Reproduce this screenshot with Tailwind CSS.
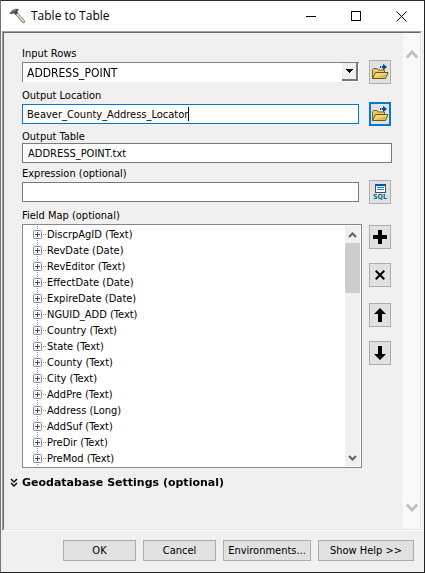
<!DOCTYPE html>
<html lang="en">
<head>
<meta charset="utf-8">
<title>Table to Table</title>
<script src="https://cdn.jsdelivr.net/npm/@tailwindcss/browser@4"></script>
</head>
<body class="bg-[#f0f0f0] text-black font-['DejaVu_Sans_Condensed','DejaVu_Sans',sans-serif] text-[11px] leading-4">
<svg class="hidden" aria-hidden="true">
  <defs>
    <symbol id="folder" viewBox="0 0 18 18">
      <path d="M1.500 15V6.500l1-1H6l1 1.500h6.500v2" fill="#e8ca6a" stroke="#7d6420"/>
      <path d="M1.500 15.500 4.500 9.500h12.500l-2.500 6z" fill="#f1d777" stroke="#6b5518"/>
      <path d="M3.500 14.500h10.500l1-3z" fill="#dcb445"/>
      <path d="M9 5V3h3V.800l4 3.200-4 3.200V5z" fill="#0b4a86"/>
      <path d="M10.500 2.500v3" stroke="#e1e1e1" stroke-width=".8"/>
    </symbol>
    <symbol id="expand" viewBox="0 0 24 16">
      <path d="M14.500 0v16" stroke="#8a8a8a" stroke-dasharray="1 1"/>
      <path d="M20 8.500h3" stroke="#8a8a8a" stroke-dasharray="1 1"/>
      <rect x="10.500" y="4.500" width="8" height="8" rx="1" fill="#f6f6f6" stroke="#8f8f8f"/>
      <path d="M12 8.500h5M14.500 6v5" stroke="#34519c"/>
    </symbol>
  </defs>
</svg>
<div class="min-h-screen flex flex-col border-l border-l-[#777] border-t border-t-[#2b2b2f] border-r border-r-[#222] border-b border-b-[#222]">
  <header class="h-[30px] bg-white flex items-center pl-2">
    <svg class="w-4 h-4 mr-1.5" viewBox="0 0 16 16" aria-hidden="true">
      <path d="M7 5 14.500 13.500" stroke="#8d7a62" stroke-width="3.200" stroke-linecap="round"/>
      <path d="M7 5 14.500 13.300" stroke="#e6d8c0" stroke-width="1.700" stroke-linecap="round"/>
      <path d="M.5 5.500 3 2.200 6 .8l4 .2L8.500 3.200 8.800 5 6.500 7 4.500 5 2.500 6.200z" fill="#4b4f52"/>
      <path d="M2 4.300 4 2.500 7 1.600" stroke="#a9adaf" fill="none"/>
    </svg>
    <h1 class="flex-1 font-['Open_Sans','Noto_Sans',sans-serif] text-xs">Table to Table</h1>
    <button type="button" aria-label="Minimize" class="w-[45px] h-full flex items-center justify-center"><svg class="w-[11px] h-[11px]" viewBox="0 0 11 11"><path d="M0 5.500h10" stroke="#000"/></svg></button>
    <button type="button" aria-label="Maximize" class="w-[45px] h-full flex items-center justify-center"><svg class="w-[11px] h-[11px]" viewBox="0 0 11 11"><rect x=".5" y=".5" width="9" height="9" fill="none" stroke="#000"/></svg></button>
    <button type="button" aria-label="Close" class="w-[45px] h-full flex items-center justify-center"><svg class="w-[11px] h-[11px]" viewBox="0 0 11 11"><path d="M.5.5l10 10M10.500.5l-10 10" stroke="#000"/></svg></button>
  </header>

  <main class="flex-1 flex mr-[2px] ml-px border-l border-t border-t-[#a0a0a0] border-l-[#a0a0a0] border-r border-b border-r-white border-b-white">
    <div class="flex-1 flex border-l border-t border-l-[#696969] border-t-[#696969] border-r border-b border-r-[#e3e3e3] border-b-[#e3e3e3]">
      <form id="tool" class="flex-1 pl-[18px] pr-[11px] pt-[13px] pb-6">
        <div>
          <label for="rows" class="block h-3.5">Input Rows</label>
          <div class="flex items-center gap-2.5 pr-px">
            <div class="relative flex-1">
              <select id="rows" class="block w-full h-5 appearance-none bg-white border-l border-t border-[#808080] pl-1 text-xs leading-4"><option>ADDRESS_POINT</option></select>
              <span class="absolute right-px top-px bottom-px w-4 bg-[#f0f0f0] border-r-2 border-b-2 border-[#777] flex items-center justify-center pointer-events-none"><svg class="w-[7px] h-1" viewBox="0 0 7 4" shape-rendering="crispEdges"><path d="M0 0h7L3.500 4z"/></svg></span>
            </div>
            <button type="button" aria-label="Browse input rows" class="w-[22px] h-6 bg-[#e1e1e1] border border-[#adadad] flex items-center justify-center"><svg class="w-[18px] h-[18px]"><use href="#folder"/></svg></button>
          </div>
        </div>
        <div class="mt-1">
          <label for="loc" class="block h-3.5">Output Location</label>
          <div class="flex items-center gap-2.5 pr-px">
            <div class="flex-1 h-5 flex bg-white border border-[#0078d7]"><input id="loc" value="Beaver_County_Address_Locator" autofocus class="field-sizing-content pl-1 pt-px outline-none border-r border-black my-0.5"></div>
            <button type="button" aria-label="Browse output location" class="w-[22px] h-6 bg-[#e1e1e1] border-2 border-[#0078d7] flex items-center justify-center"><svg class="w-[18px] h-[18px] shrink-0"><use href="#folder"/></svg></button>
          </div>
        </div>
        <div class="mt-[3px]">
          <label for="table" class="block h-3.5">Output Table</label>
          <input id="table" value="ADDRESS_POINT.txt" class="block w-full h-5 bg-white border border-[#7a7a7a] px-[5px]">
        </div>
        <div class="mt-[3px]">
          <label for="expr" class="block h-3.5">Expression (optional)</label>
          <div class="flex items-center gap-2.5 pr-px">
            <input id="expr" class="flex-1 min-w-0 h-5 bg-white border border-[#7a7a7a] px-[5px]">
            <button type="button" aria-label="SQL query builder" class="w-[22px] h-6 bg-[#e1e1e1] border border-[#adadad] flex flex-col items-center justify-center">
              <svg class="w-[11px] h-[9px] shrink-0" viewBox="0 0 11 9" shape-rendering="crispEdges"><path d="M0 0h11v9H0z" fill="#4b4f55"/><path d="M0 0h11v2H0z" fill="#0754b5"/><path d="M1 2h9v6H1z" fill="#fff"/><path d="M2 3h7v1H2zM2 5h7v1H2z" fill="#1885e0"/></svg>
              <span class="text-[7px] leading-[8px] font-bold text-[#086b94]">SQL</span>
            </button>
          </div>
        </div>
        <div class="mt-1">
          <h2 id="map" class="h-4">Field Map (optional)</h2>
          <div class="flex gap-[7px] pr-px">
            <div class="flex-1 flex bg-white border border-[#828790] p-px">
              <ul id="fields" role="tree" aria-labelledby="map" class="flex-1 -ml-px"></ul>
              <div class="w-[15px] bg-[#f0f0f0] flex flex-col items-center">
                <svg class="w-[15px] h-[17px]" viewBox="0 0 15 17"><path d="M4 11 7.500 7.500 11 11" fill="none" stroke="#606060" stroke-width="2"/></svg>
                <div class="w-[15px] h-[50px] bg-[#cdcdcd]"></div>
                <svg class="w-[15px] h-[17px] mt-auto" viewBox="0 0 15 17"><path d="M4 7 7.500 10.500 11 7" fill="none" stroke="#606060" stroke-width="2"/></svg>
              </div>
            </div>
            <div class="flex flex-col gap-3.5 pt-px">
              <button type="button" aria-label="Add field" class="w-[22px] h-6 bg-[#e1e1e1] border border-[#adadad] flex items-center justify-center"><svg class="w-3.5 h-3.5" viewBox="0 0 14 14"><path d="M5 0h4v5h5v4H9v5H5V9H0V5h5z"/></svg></button>
              <button type="button" aria-label="Remove field" class="w-[22px] h-6 bg-[#e1e1e1] border border-[#adadad] flex items-center justify-center"><svg class="w-2.5 h-2.5" viewBox="0 0 10 10"><path d="M.7.7l8.600 8.600M9.300.7.7 9.300" stroke="#000" stroke-width="2"/></svg></button>
              <button type="button" aria-label="Move up" class="mt-0.5 w-[22px] h-6 bg-[#e1e1e1] border border-[#adadad] flex items-center justify-center"><svg class="w-3 h-3.5" viewBox="0 0 12 14"><path d="M6 0l6 6H8v8H4V6H0z"/></svg></button>
              <button type="button" aria-label="Move down" class="w-[22px] h-6 bg-[#e1e1e1] border border-[#adadad] flex items-center justify-center"><svg class="w-3 h-3.5" viewBox="0 0 12 14"><path d="M6 14l6-6H8V0H4v8H0z"/></svg></button>
            </div>
          </div>
        </div>
        <button type="button" class="mt-[7px] -ml-3 flex items-center gap-1 font-bold font-['DejaVu_Sans',sans-serif]">
          <svg class="w-2 h-2.5" viewBox="0 0 8 10" aria-hidden="true"><path d="M1 1l3 3 3-3M1 5l3 3 3-3" fill="none" stroke="#000" stroke-width="1.400"/></svg>
          Geodatabase Settings (optional)
        </button>
      </form>
      <div class="w-[17px] bg-[#f9f9f9] flex flex-col justify-between items-center pt-4 pb-4">
        <svg class="w-3 h-3" viewBox="0 0 12 12"><path d="M.7 8.500 6 3l5.300 5.500" fill="none" stroke="#bfbfbf" stroke-width="2.800"/></svg>
        <svg class="w-3 h-3" viewBox="0 0 12 12"><path d="M.7 3.500 6 9l5.300-5.500" fill="none" stroke="#bfbfbf" stroke-width="2.800"/></svg>
      </div>
    </div>
  </main>

  <footer class="flex justify-end gap-[7px] pt-[9px] pb-[11px] pr-2.5">
    <button type="submit" form="tool" class="w-[73px] h-[21px] bg-[#e1e1e1] border border-[#adadad]">OK</button>
    <button type="button" class="w-[73px] h-[21px] bg-[#e1e1e1] border border-[#adadad]">Cancel</button>
    <button type="button" class="w-[88px] h-[21px] bg-[#e1e1e1] border border-[#adadad]">Environments...</button>
    <button type="button" class="w-24 h-[21px] bg-[#e1e1e1] border border-[#adadad]">Show Help &gt;&gt;</button>
  </footer>
</div>
<script>
const fields = ["DiscrpAgID (Text)","RevDate (Date)","RevEditor (Text)","EffectDate (Date)","ExpireDate (Date)","NGUID_ADD (Text)","Country (Text)","State (Text)","County (Text)","City (Text)","AddPre (Text)","Address (Long)","AddSuf (Text)","PreDir (Text)","PreMod (Text)"];
document.getElementById("fields").innerHTML = fields.map(f =>
  `<li role="treeitem" aria-expanded="false" class="h-4 flex items-start"><svg class="w-6 h-4 shrink-0"><use href="#expand"/></svg><span class="pt-px">${f}</span></li>`).join("");
</script>
</body>
</html>
